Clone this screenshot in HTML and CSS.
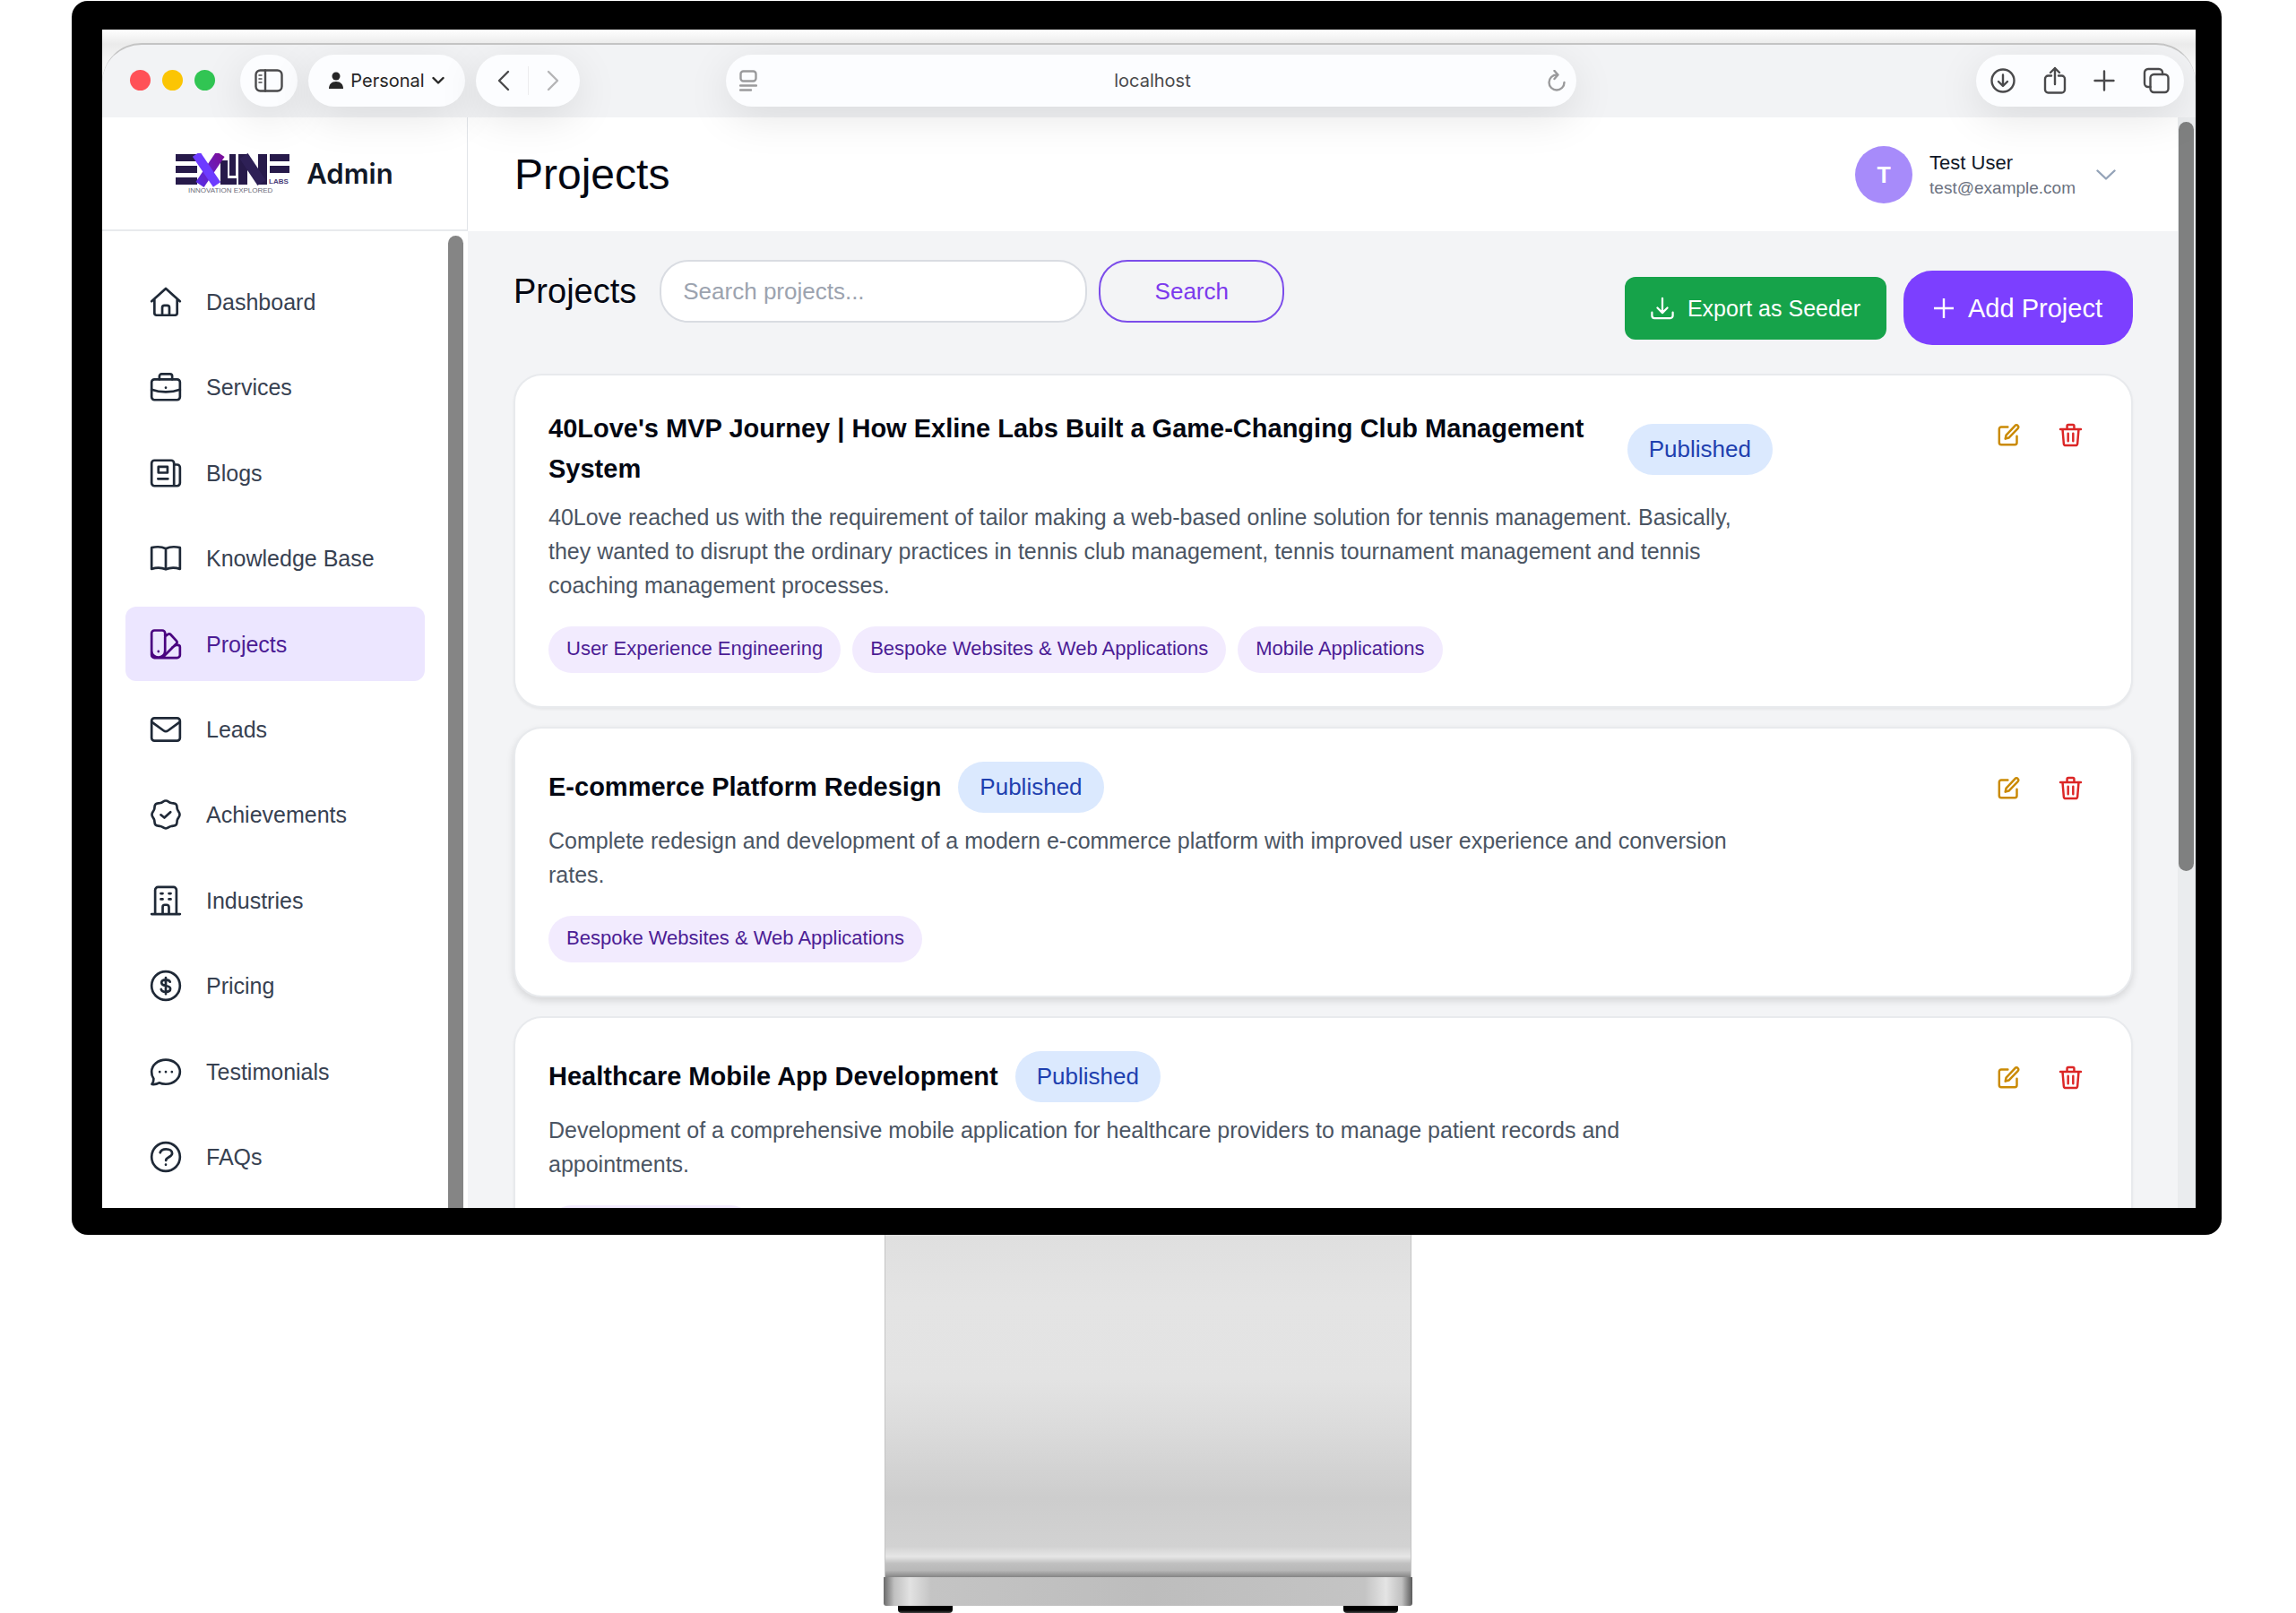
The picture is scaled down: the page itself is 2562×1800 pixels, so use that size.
FILE: index.html
```html
<!DOCTYPE html>
<html lang="en">
<head>
<meta charset="utf-8">
<meta name="viewport" content="width=device-width, initial-scale=1">
<title>Projects - Exline Admin</title>
<link rel="stylesheet" href="styles.css">
</head>
<body>
<svg class="sprite" aria-hidden="true">
  <symbol id="i-edit" viewBox="0 0 24 24"><path d="M11 4H4.500a2 2 0 0 0-2 2v13.500a2 2 0 0 0 2 2H18a2 2 0 0 0 2-2V13"/><path d="M18.200 2.700a1.900 1.900 0 0 1 2.800 0 1.900 1.900 0 0 1 0 2.800L12 14.700 8.600 15.700l.8-3.600z"/></symbol>
  <symbol id="i-trash" viewBox="0 0 24 24"><path d="M1.800 6.200h20.400M4 6.200l1.200 14.300a2 2 0 0 0 2 1.800h9.600a2 2 0 0 0 2-1.800L20 6.200M8.500 6V3a1.200 1.200 0 0 1 1.200-1.200h4.600A1.200 1.200 0 0 1 15.500 3v3M9.500 10.500v7.500M14.500 10.500v7.500"/></symbol>
</svg>

<div class="monitor">
 <div class="screen">
  <div class="window">
   <div class="toolbar">
     <div class="lights"><span class="light red"></span><span class="light yellow"></span><span class="light green"></span></div>
     <button class="pill pill-side" aria-label="Toggle sidebar"><svg viewBox="0 0 32 26" width="32" height="26" class="line"><rect x="1.500" y="1.500" width="29" height="23" rx="5"/><path d="M12 1.500v23"/><path d="M5 7h3M5 11h3M5 15h3" stroke-width="1.500"/></svg></button>
     <button class="pill pill-profile"><svg viewBox="0 0 16 20" width="16" height="20"><circle cx="8" cy="5" r="4.500"/><path d="M0 19c0-5 3-8 8-8s8 3 8 8z"/></svg>Personal<svg viewBox="0 0 14 10" width="14" height="10" class="line"><path d="M1.500 2 7 7.500 12.500 2"/></svg></button>
     <div class="pill pill-nav">
       <button class="bare" aria-label="Back"><svg viewBox="0 0 14 24" width="14" height="24" class="line"><path d="M12 2 2 12l10 10"/></svg></button>
       <span class="divider"></span>
       <button class="bare faded" aria-label="Forward"><svg viewBox="0 0 14 24" width="14" height="24" class="line"><path d="m2 2 10 10L2 22"/></svg></button>
     </div>
     <div class="pill pill-url">
       <svg viewBox="0 0 20 24" width="20" height="24" class="line soft"><rect x="1.500" y="1.500" width="17" height="11" rx="3"/><path d="M1 17.500h18M1 22.500h12"/></svg>
       <input class="address" type="text" value="localhost" aria-label="Address">
       <button class="bare" aria-label="Reload"><svg viewBox="0 0 20 24" width="20" height="24" class="line soft"><path d="M10 5.500a8.500 8.500 0 1 0 8.500 8.500M7.500 1l4 4.500-4 4.500"/></svg></button>
     </div>
     <div class="pill pill-tools">
       <button class="bare" aria-label="Downloads"><svg viewBox="0 0 28 28" width="28" height="28" class="line"><circle cx="14" cy="14" r="12.500"/><path d="M14 7.500v12M9 15l5 5 5-5"/></svg></button>
       <button class="bare" aria-label="Share"><svg viewBox="0 0 26 32" width="26" height="32" class="line"><path d="M9 10.500H5.500a3.500 3.500 0 0 0-3.500 3.500v12a3.500 3.500 0 0 0 3.500 3.500h15A3.500 3.500 0 0 0 24 26V14a3.500 3.500 0 0 0-3.500-3.500H17M13 20V2M8 7l5-5 5 5"/></svg></button>
       <button class="bare" aria-label="New tab"><svg viewBox="0 0 24 24" width="24" height="24" class="line"><path d="M12 1.500v21M1.500 12h21"/></svg></button>
       <button class="bare" aria-label="Show tabs"><svg viewBox="0 0 30 30" width="30" height="30" class="line"><rect x="8.500" y="8" width="20" height="20" rx="4"/><path d="M8.500 22H6a4 4 0 0 1-4-4V6a4 4 0 0 1 4-4h12a4 4 0 0 1 4 4v2"/></svg></button>
     </div>
   </div>

   <div class="page">
    <aside class="sidebar">
      <div class="brand">
        <svg class="logo" viewBox="0 0 127 46" role="img" aria-label="Exline Labs">
          <defs>
            <linearGradient id="violet" x1="1" y1="0" x2="0" y2="1"><stop offset="0" stop-color="#7a0f9c"/><stop offset="1" stop-color="#5b2be0"/></linearGradient>
          </defs>
          <g fill="#271a4a">
            <rect x="0" y="1" width="24" height="8"/><rect x="0" y="14" width="24" height="8"/><rect x="0" y="27" width="24" height="8"/>
            <rect x="105" y="1" width="22" height="8"/><rect x="105" y="14" width="22" height="8"/>
            <rect x="50" y="8" width="8" height="27"/><rect x="50" y="28" width="18" height="7"/>
            <rect x="60" y="1" width="7" height="24"/><rect x="70" y="1" width="10" height="34"/><rect x="92" y="1" width="10" height="34"/>
          </g>
          <path d="M76 3 96 33" stroke="#2e2056" stroke-width="11"/>
          <path d="M50 1 27 35" stroke="url(#violet)" stroke-width="11"/>
          <path d="M23 1 46 35" stroke="#6d3bff" stroke-width="10"/>
          <text x="104" y="34" font-size="8" font-weight="700" fill="#4b3d78">LABS</text>
          <text x="14" y="44" font-size="8" fill="#6b6b78">INNOVATION EXPLORED</text>
        </svg>
        <span class="brand-name">Admin</span>
      </div>
      <div class="side-body">
       <nav class="nav" aria-label="Main">
        <a href="#"><svg viewBox="0 0 24 24"><path d="M2 11.500 12 2.500l10 9M4 10v9.800A1.500 1.500 0 0 0 5.500 21.300h13a1.500 1.500 0 0 0 1.500-1.500V10M9.500 21v-5a1.500 1.500 0 0 1 1.500-1.500h2a1.500 1.500 0 0 1 1.500 1.500v5"/></svg>Dashboard</a>
        <a href="#"><svg viewBox="0 0 24 24"><rect x="2" y="6.500" width="20" height="14.500" rx="2"/><path d="M7.500 6.500V4.300A1.500 1.500 0 0 1 9 2.800h6a1.500 1.500 0 0 1 1.500 1.500v2.200M2 13.800c6 2.200 14 2.200 20 0M12 12.300v.1"/></svg>Services</a>
        <a href="#"><svg viewBox="0 0 24 24"><path d="M17.800 21V5a2 2 0 0 0-2-2H4a2 2 0 0 0-2 2v14a2 2 0 0 0 2 2h16a2 2 0 0 0 2-2V8a2 2 0 0 0-2-2h-2.200M6.800 7.500h6.400v4.200H6.800zM6.500 16h7"/></svg>Blogs</a>
        <a href="#"><svg viewBox="0 0 24 24"><path d="M12 5.200C9 3.700 5.500 3.700 2 4.500v15c3.500-1 7-1 10 .3 3-1.300 6.500-1.300 10-.3v-15c-3.500-.8-7-.8-10 .7zM12 5.200v14.500"/></svg>Knowledge Base</a>
        <a href="#" class="active" aria-current="page"><svg viewBox="0 0 24 24"><path d="M4 2.200h5.500a2 2 0 0 1 2 2v12.300a4.700 4.700 0 0 1-9.500 0V4.200a2 2 0 0 1 2-2zM11.500 6.500l2-1.500a1.500 1.500 0 0 1 2 .2l4 4.300a1.500 1.500 0 0 1 0 2L10 21M16.500 14.300 19 12.500h1.500A1.500 1.500 0 0 1 22 14v5.500a2 2 0 0 1-2 2H6.500M2 16.500v3a2 2 0 0 0 2 2h3M6.800 17v.1"/></svg>Projects</a>
        <a href="#"><svg viewBox="0 0 24 24"><rect x="2" y="4" width="20" height="16" rx="2"/><path d="m2.500 7 7.900 5.800a2.700 2.700 0 0 0 3.200 0L21.500 7"/></svg>Leads</a>
        <a href="#"><svg viewBox="0 0 24 24"><path d="M12 2.200c1.600 0 2.300 1.300 3.800 1.600 1.500.4 2.500-.1 3.400.9 1 1 .5 2.100.9 3.500.4 1.500 1.700 2.200 1.700 3.800s-1.300 2.300-1.700 3.800c-.4 1.400.1 2.500-.9 3.500-.9.900-1.900.5-3.400.9-1.500.3-2.200 1.600-3.800 1.600s-2.300-1.300-3.800-1.600c-1.500-.4-2.500 0-3.400-.9-1-1-.5-2.100-.9-3.500C3.500 14.300 2.200 13.600 2.200 12s1.300-2.300 1.700-3.800c.4-1.400-.1-2.500.9-3.500.9-1 1.900-.5 3.400-.9C9.700 3.500 10.400 2.200 12 2.200zM8.500 12.200l2.500 2 4.300-4"/></svg>Achievements</a>
        <a href="#"><svg viewBox="0 0 24 24"><path d="M2 21.500h20M4.500 21.500v-17a2 2 0 0 1 2-2h11a2 2 0 0 1 2 2v17M9.800 21v-4.500A1.500 1.500 0 0 1 11.300 15h1.400a1.500 1.500 0 0 1 1.500 1.500V21M8.500 7h1.300M14.200 7h1.300M8.500 11h1.300M14.200 11h1.300"/></svg>Industries</a>
        <a href="#"><svg viewBox="0 0 24 24"><circle cx="12" cy="12" r="10"/><path d="M15 9.300c-.4-1-1.500-1.500-3-1.500-1.700 0-3 .7-3 2s1.100 1.900 3 2.200 3.200.8 3.200 2.200-1.400 2.100-3.200 2.100c-1.700 0-3-.6-3.300-1.800M12 6.300v11.500"/></svg>Pricing</a>
        <a href="#"><svg viewBox="0 0 24 24"><path d="M12 3.500c5.500 0 10 3.700 10 8.500s-4.500 8.700-10 8.700c-1.800 0-3.300-.3-4.700-.9-1.500.9-3.300 1.200-5.100 1 1-1.300 1.300-2.500 1.200-3.900A8 8 0 0 1 2 12c0-4.800 4.500-8.500 10-8.500zM7.700 12v.1M12 12v.1M16.300 12v.1"/></svg>Testimonials</a>
        <a href="#"><svg viewBox="0 0 24 24"><circle cx="12" cy="12" r="10"/><path d="M8 9c.5-1.600 2-2.500 4.200-2.500 2.600 0 4.300 1.200 4.300 3 0 2.700-4.400 2.600-4.400 5M12 17.500v.1"/></svg>FAQs</a>
       </nav>
       <div class="scroll side-scroll"></div>
      </div>
    </aside>

    <div class="content">
      <header class="topbar">
        <h1>Projects</h1>
        <button class="account">
          <span class="avatar">T</span>
          <span class="who"><span class="name">Test User</span><span class="mail">test@example.com</span></span>
          <svg viewBox="0 0 22 12" width="22" height="12"><path d="m1.500 1.500 9.500 9 9.500-9"/></svg>
        </button>
      </header>
      <main class="main">
        <div class="actions">
          <form class="search">
            <h2>Projects</h2>
            <input class="field" type="search" placeholder="Search projects..." aria-label="Search projects">
            <button class="btn-search" type="button">Search</button>
          </form>
          <div class="buttons">
            <button class="btn-export"><svg viewBox="0 0 28 28" width="26" height="26"><path d="M14 2v17M8 13.500l6 6 6-6M1.500 19v4a3 3 0 0 0 3 3h19a3 3 0 0 0 3-3v-4"/></svg>Export as Seeder</button>
            <button class="btn-add"><svg viewBox="0 0 22 22" width="22" height="22"><path d="M11 0v22M0 11h22"/></svg>Add Project</button>
          </div>
        </div>

        <article class="card">
          <div class="info">
            <div class="title"><h3>40Love's MVP Journey | How Exline Labs Built a Game-Changing Club Management System</h3><span class="badge">Published</span></div>
            <p>40Love reached us with the requirement of tailor making a web-based online solution for tennis management. Basically, they wanted to disrupt the ordinary practices in tennis club management, tennis tournament management and tennis coaching management processes.</p>
            <div class="tags"><span>User Experience Engineering</span><span>Bespoke Websites &amp; Web Applications</span><span>Mobile Applications</span></div>
          </div>
          <div class="tools"><button class="edit" aria-label="Edit"><svg><use href="#i-edit"/></svg></button><button class="trash" aria-label="Delete"><svg><use href="#i-trash"/></svg></button></div>
        </article>

        <article class="card raised">
          <div class="info">
            <div class="title"><h3>E-commerce Platform Redesign</h3><span class="badge">Published</span></div>
            <p>Complete redesign and development of a modern e-commerce platform with improved user experience and conversion rates.</p>
            <div class="tags"><span>Bespoke Websites &amp; Web Applications</span></div>
          </div>
          <div class="tools"><button class="edit" aria-label="Edit"><svg><use href="#i-edit"/></svg></button><button class="trash" aria-label="Delete"><svg><use href="#i-trash"/></svg></button></div>
        </article>

        <article class="card">
          <div class="info">
            <div class="title"><h3>Healthcare Mobile App Development</h3><span class="badge">Published</span></div>
            <p>Development of a comprehensive mobile application for healthcare providers to manage patient records and appointments.</p>
            <div class="tags"><span class="tag-blank"></span></div>
          </div>
          <div class="tools"><button class="edit" aria-label="Edit"><svg><use href="#i-edit"/></svg></button><button class="trash" aria-label="Delete"><svg><use href="#i-trash"/></svg></button></div>
        </article>
      </main>
    </div>
    <div class="track"><div class="scroll page-scroll"></div></div>
   </div>
  </div>
 </div>
</div>

<div class="stand">
  <div class="neck"></div>
  <div class="base"></div>
  <div class="feet"><span></span><span></span></div>
</div>
</body>
</html>
```
FILE: styles.css
```css
* { box-sizing: border-box; }
body {
  margin: 0;
  height: 100vh;
  display: flex;
  flex-direction: column;
  background: #fff;
  color: #030712;
  font-family: "Liberation Sans", Arial, Helvetica, sans-serif;
  font-size: 26px;
  line-height: 38px;
  overflow: hidden;
}
h1, h2, h3, p { margin: 0; font-weight: 400; }
button, input { font: inherit; color: inherit; border: 0; padding: 0; background: none; }
button { cursor: pointer; }
svg { flex: none; fill: none; stroke: currentColor; stroke-linecap: round; stroke-linejoin: round; display: block; }
.sprite { display: none; }

/* Display */
.monitor {
  flex: 1;
  min-height: 0;
  margin: 1px 83px 0 80px;
  padding: 32px 29px 30px 34px;
  background: #000;
  border-radius: 18px;
  display: flex;
}
.screen {
  flex: 1;
  min-width: 0;
  padding-top: 15px;
  background: linear-gradient(#fff, #ebebeb 16px, #f7f7f7 40px);
  overflow: hidden;
  display: flex;
}
.window {
  flex: 1;
  min-width: 0;
  display: flex;
  flex-direction: column;
  border-top: 2px solid #c4c4c4;
  border-radius: 44px 44px 0 0;
  background: #f2f3f5;
  overflow: hidden;
}

/* Browser toolbar */
.toolbar {
  position: relative;
  z-index: 1;
  height: 81px;
  flex: none;
  display: flex;
  align-items: center;
  padding: 0 13px 2px 31px;
  font: 400 20px/26px Inter, sans-serif;
  color: #4a4a4c;
}
.lights { display: flex; gap: 13px; margin-right: 28px; }
.light { width: 23px; height: 23px; border-radius: 50%; }
.red { background: #ff5157; }
.yellow { background: #fbc504; }
.green { background: #31c553; }
.pill {
  height: 58px;
  display: flex;
  align-items: center;
  justify-content: center;
  background: #fcfdff;
  border-radius: 29px;
  box-shadow: 0 12px 48px rgba(0, 0, 0, .1);
}
.pill-side { width: 64px; }
.pill-profile { width: 175px; margin-left: 12px; gap: 8px; color: #262626; }
.pill-profile svg:first-child { fill: currentColor; stroke: none; }
.pill-nav { width: 116px; margin-left: 12px; gap: 20px; }
.pill-url { flex: 1; margin: 0 446px 0 163px; padding: 0 12px 0 15px; }
.pill-tools { width: 232px; padding: 0 16px; justify-content: space-between; }
.bare { display: flex; }
.faded { color: #b4b4b6; }
.divider { width: 1px; height: 32px; background: #ececee; }
.line { stroke-width: 2.4; }
.soft { color: #9a9a9c; }
.address { flex: 1; min-width: 0; text-align: center; outline: 0; }

/* Application */
.page { flex: 1; min-height: 0; display: flex; }
.sidebar { width: 408px; flex: none; display: flex; flex-direction: column; background: #fff; }
.brand {
  height: 127px;
  flex: none;
  display: flex;
  align-items: center;
  justify-content: center;
  gap: 19px;
  border-bottom: 2px solid #e8eaed;
  border-right: 1px solid #e1e4e9;
}
.logo { width: 127px; height: 46px; stroke-linecap: butt; }
.logo rect, .logo text { stroke: none; }
.brand-name { font: 600 31px/44px Inter, sans-serif; color: #111827; }
.side-body { flex: 1; min-height: 0; display: flex; padding-right: 5px; }
.nav { flex: 1; display: flex; flex-direction: column; padding: 31px 26px 9px; }
.nav a {
  flex: 1;
  display: flex;
  align-items: center;
  gap: 26px;
  margin: 6px 0;
  padding: 0 26px;
  border-radius: 12px;
  color: #374151;
  font-size: 25px;
  text-decoration: none;
}
.nav svg { width: 38px; height: 38px; stroke-width: 1.7; color: #1f2937; }
.nav .active { background: #ece6ff; color: #4c1d95; }
.nav .active svg { color: #4a0580; }
.scroll { background: #858585; }
.side-scroll { width: 17px; margin-top: 5px; border-radius: 9px 9px 0 0; }
.content { flex: 1; min-width: 0; display: flex; flex-direction: column; background: #f3f4f6; }
.track { width: 20px; flex: none; padding: 5px 2px 0 1px; background: #eaecee; }
.page-scroll { height: 69%; border-radius: 9px; background: #7f8080; }

.topbar {
  height: 127px;
  flex: none;
  display: flex;
  align-items: center;
  justify-content: space-between;
  padding: 0 69px 0 52px;
  background: #fff;
}
h1 { font-size: 48px; line-height: 56px; }
.account { display: flex; align-items: center; text-align: left; }
.avatar {
  width: 64px;
  height: 64px;
  border-radius: 50%;
  background: #a78bfa;
  color: #fff;
  font-size: 25px;
  font-weight: 700;
  line-height: 64px;
  text-align: center;
}
.who { display: flex; flex-direction: column; margin: 0 23px 0 19px; padding-top: 2px; }
.name { font-size: 22px; line-height: 28px; color: #111827; }
.mail { font-size: 19px; line-height: 28px; color: #6b7280; }
.account svg { stroke-width: 2.4; color: #94a3b8; }

.main { flex: 1; min-height: 0; padding: 32px 50px 0 51px; overflow: hidden; }
.actions { display: flex; justify-content: space-between; align-items: flex-end; height: 95px; margin-bottom: 32px; }
.search { display: flex; align-items: center; align-self: flex-start; }
h2 { font-size: 38px; line-height: 52px; margin-right: 26px; }
.field {
  width: 477px;
  height: 70px;
  margin-right: 13px;
  padding: 0 24px;
  border: 2px solid #d9dce2;
  border-radius: 32px;
  background: #fff;
  outline: 0;
}
.field::placeholder { color: #9ca3af; opacity: 1; }
.btn-search { width: 207px; height: 70px; border: 2px solid #7c4dea; border-radius: 32px; color: #7c3aed; }
.buttons { display: flex; align-items: center; gap: 19px; }
.buttons button { display: flex; align-items: center; justify-content: center; color: #fff; }
.buttons .btn-export { width: 292px; height: 70px; gap: 15px; border-radius: 12px; background: #16a34a; font-size: 25px; }
.buttons .btn-add { width: 256px; height: 83px; gap: 16px; border-radius: 32px; background: #7c3fff; font-size: 29px; }
.btn-export svg, .btn-add svg { stroke-width: 2.4; }

.card {
  display: flex;
  justify-content: space-between;
  margin-bottom: 21px;
  padding: 37px;
  border: 2px solid #e8eaed;
  border-radius: 32px;
  background: #fff;
  box-shadow: 0 2px 3px rgba(0, 0, 0, .05);
}
.raised { box-shadow: 0 4px 8px rgba(0, 0, 0, .12); }
.info { width: 79%; }
.title { display: flex; align-items: center; gap: 19px; margin-bottom: 12px; }
h3 { font-size: 29px; line-height: 45px; font-weight: 700; }
.badge { flex: none; height: 57px; padding: 0 24px; border-radius: 29px; background: #dbe9fe; color: #1e40af; line-height: 56px; }
.info p { padding-right: 20px; color: #4b5563; font-size: 25px; }
.tags { display: flex; gap: 13px; margin-top: 27px; }
.tags span { height: 52px; padding: 0 20px; border-radius: 26px; background: #f2ebfe; color: #4c1d95; font-size: 22px; line-height: 50px; }
.tags .tag-blank { width: 229px; }
.tools { display: flex; align-items: flex-start; gap: 18px; padding: 4px 5px 0 0; }
.tools button { padding: 12px; }
.tools svg { width: 27px; height: 27px; stroke-width: 2.2; }
.edit { color: #ca8a04; }
.trash { color: #dc2626; }

/* Stand */
.stand { width: 590px; margin: 0 auto; flex: none; display: flex; flex-direction: column; }
.neck {
  height: 382px;
  margin: 0 1px;
  border: 1px solid #c4c4c4;
  border-width: 0 1px;
  background: linear-gradient(#dfdfdf, #e4e4e4 20%, #e3e3e3 42%, #dcdcdc 55%, #cdcdcd 77%, #d2d2d2 91%, #e6e6e6 94%, #c0c0c0 96%, #b8b8b8 98%, #858585);
}
.base {
  height: 32px;
  border-radius: 0 0 3px 3px;
  background: linear-gradient(90deg, #6a6a6a, #c0c0c0 2%, #e2e2e2 5%, #c4c4c4 9%, #bdbdbd 50%, #c4c4c4 91%, #e4e4e4 95%, #c0c0c0 98%, #5a5a5a);
}
.feet { display: flex; justify-content: space-between; padding: 0 16px; }
.feet span { width: 61px; height: 8px; background: linear-gradient(#000 60%, #444); border-radius: 0 0 4px 4px; }
```
